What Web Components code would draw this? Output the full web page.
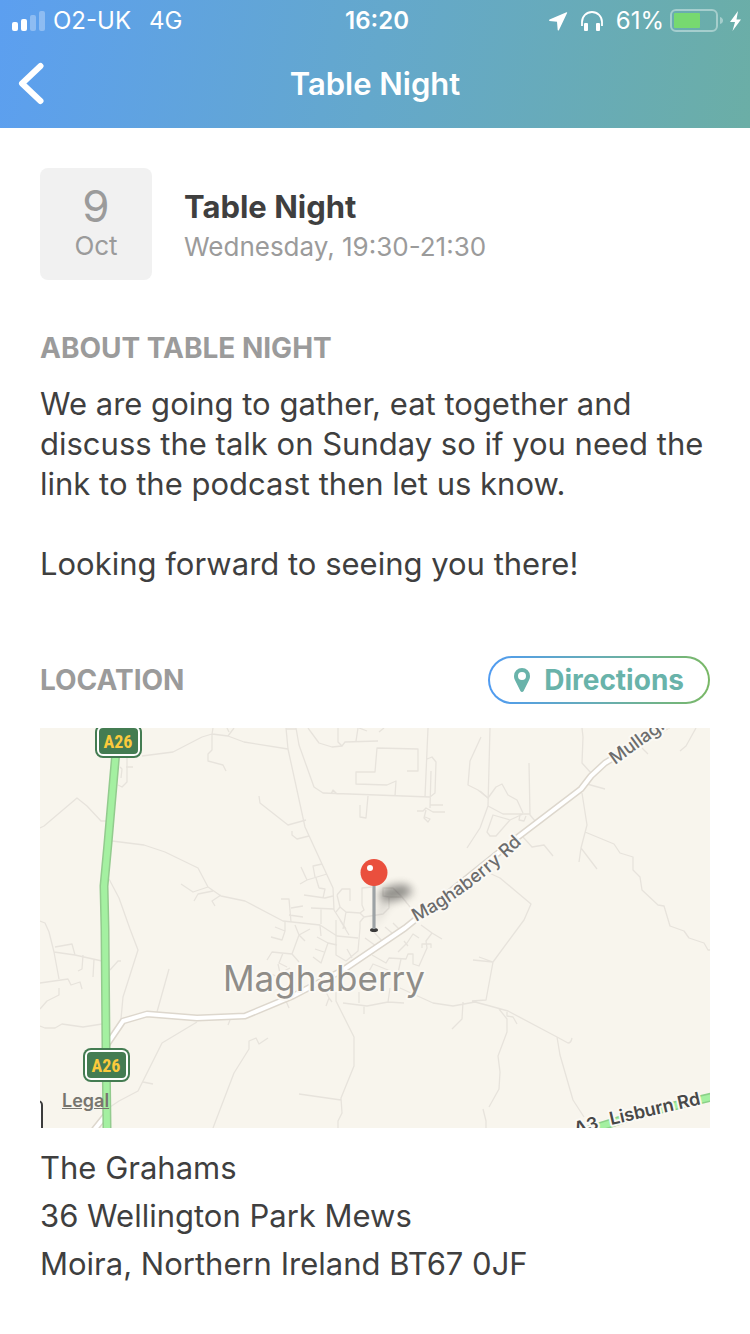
<!DOCTYPE html>
<html lang="en">
<head>
    <meta charset="UTF-8">
    <meta name="viewport" content="width=device-width, initial-scale=1">
    <title>Table Night</title>
    <style>
        body {
            margin: 0;
            background: #fff;
            color: #3f3f3f;
            font-family: Inter, "Liberation Sans", sans-serif;
        }
    </style>
</head>
<body>
    <event-page>
        <app-header slot="header" heading="Table Night">
            <status-bar carrier="O2-UK" network="4G" time="16:20" battery="61"></status-bar>
        </app-header>

        <event-summary day="9" month="Oct">
            <span slot="title">Table Night</span>
            <span slot="time">Wednesday, 19:30-21:30</span>
        </event-summary>

        <info-section>
            <span slot="title">ABOUT TABLE NIGHT</span>
            <event-text>
                <p>We are going to gather, eat together and discuss the talk on Sunday so if you need the link to the podcast then let us know.</p>
                <p>Looking forward to seeing you there!</p>
            </event-text>
        </info-section>

        <info-section class="location">
            <span slot="title">LOCATION</span>
            <directions-link slot="action" href="#directions">Directions</directions-link>
            <location-map></location-map>
            <postal-address>
                <span>The Grahams</span>
                <span>36 Wellington Park Mews</span>
                <span>Moira, Northern Ireland BT67 0JF</span>
            </postal-address>
        </info-section>
    </event-page>

    <script>
        class EventPage extends HTMLElement {
            template = `
                <style>
                    :host {
                        display: block;
                    }

                    main {
                        display: flex;
                        flex-direction: column;
                        gap: 48px;
                        padding: 40px;
                    }

                    ::slotted(.location) {
                        margin-top: 24px;
                    }
                </style>
                <slot name="header"></slot>
                <main><slot></slot></main>
            `;

            constructor() {
                super();
                this.attachShadow({ mode: 'open' });
                this.shadowRoot.innerHTML = this.template;
            }
        }

        class AppHeader extends HTMLElement {
            constructor() {
                super();
                this.attachShadow({ mode: 'open' });
            }

            connectedCallback() {
                this.shadowRoot.innerHTML = `
                    <style>
                        :host {
                            display: block;
                            background: linear-gradient(100deg, #5c9ff0, #64a8cc 50%, #6baea6);
                            color: #fff;
                        }

                        nav {
                            display: grid;
                            grid-template-columns: 64px 1fr 64px;
                            align-items: center;
                            height: 88px;
                        }

                        button {
                            display: flex;
                            align-items: center;
                            height: 88px;
                            padding: 0 0 0 16px;
                            border: 0;
                            background: none;
                            color: inherit;
                        }

                        h1 {
                            margin: 0;
                            font-size: 31px;
                            line-height: 40px;
                            font-weight: 600;
                            text-align: center;
                        }
                    </style>
                    <slot></slot>
                    <nav>
                        <button type="button" aria-label="Back">
                            <svg width="30" height="44" viewBox="0 0 30 44" fill="none" stroke="currentColor" stroke-width="6" stroke-linecap="round" stroke-linejoin="round">
                                <path d="M24.500 4 6 21.500 24.500 39"/>
                            </svg>
                        </button>
                        <h1>${this.getAttribute('heading')}</h1>
                    </nav>
                `;
            }
        }

        class StatusBar extends HTMLElement {
            constructor() {
                super();
                this.attachShadow({ mode: 'open' });
            }

            connectedCallback() {
                const battery = parseInt(this.getAttribute('battery')) || 0;

                this.shadowRoot.innerHTML = `
                    <style>
                        :host {
                            box-sizing: border-box;
                            display: grid;
                            grid-template-columns: 1fr auto 1fr;
                            align-items: center;
                            height: 40px;
                            padding: 2px 8px 0 12px;
                            font-size: 24px;
                            line-height: 38px;
                        }

                        div {
                            display: flex;
                            align-items: center;
                        }

                        .left {
                            gap: 8px;
                        }

                        .network {
                            margin-left: 10px;
                        }

                        .right {
                            justify-content: flex-end;
                            gap: 6px;
                        }

                        .headphones {
                            margin: 0 6px;
                        }

                        time {
                            font-weight: 600;
                        }

                        svg {
                            flex: none;
                        }
                    </style>
                    <div class="left">
                        <svg width="33" height="20" viewBox="0 0 33 20" fill="#fff">
                            <rect y="11" width="6" height="9" rx="2"/>
                            <rect x="9" y="8" width="6" height="12" rx="2"/>
                            <rect x="18" y="4" width="6" height="16" rx="2" opacity=".3"/>
                            <rect x="27" width="6" height="20" rx="2" opacity=".3"/>
                        </svg>
                        <span>${this.getAttribute('carrier')}</span>
                        <span class="network">${this.getAttribute('network')}</span>
                    </div>
                    <time>${this.getAttribute('time')}</time>
                    <div class="right">
                        <svg width="20" height="20" viewBox="0 0 20 20" fill="#fff">
                            <path d="M18.500 1.200 1.500 8.600q-1 .8 0 1.300l7.500.9.700 8.200q.5 1 1.300 0l8.200-17.200q.1-.8-.7-.6z"/>
                        </svg>
                        <svg class="headphones" width="24" height="22" viewBox="0 0 24 22" fill="#fff">
                            <path d="M2 16v-4a10 10 0 0 1 20 0v4" fill="none" stroke="#fff" stroke-width="1.800"/>
                            <rect x="4" y="13" width="4" height="8" rx="1"/>
                            <rect x="16" y="13" width="4" height="8" rx="1"/>
                        </svg>
                        <span>${battery}%</span>
                        <svg width="54" height="24" viewBox="0 0 54 24">
                            <rect x="1" y="1" width="46" height="21" rx="5" fill="none" stroke="#fff" stroke-width="2" opacity=".4"/>
                            <rect x="4" y="4" width="${Math.round(battery * 43 / 100)}" height="15" rx="1" fill="#77d970"/>
                            <path d="M50 8q3 1 3 3.500T50 15z" fill="#fff" opacity=".4"/>
                        </svg>
                        <svg width="12" height="20" viewBox="0 0 12 20" fill="#fff">
                            <path d="M8 0 0 11h5L2.500 20 11 8.500H6.500z"/>
                        </svg>
                    </div>
                `;
            }
        }

        class EventSummary extends HTMLElement {
            constructor() {
                super();
                this.attachShadow({ mode: 'open' });
            }

            connectedCallback() {
                this.shadowRoot.innerHTML = `
                    <style>
                        :host {
                            display: flex;
                            align-items: center;
                            gap: 32px;
                        }

                        .date {
                            box-sizing: border-box;
                            display: flex;
                            flex-direction: column;
                            align-items: center;
                            justify-content: center;
                            flex: none;
                            width: 112px;
                            height: 112px;
                            border-radius: 8px;
                            background: #f1f1f1;
                            color: #9b9b9b;
                        }

                        .day {
                            font-size: 44px;
                            line-height: 44px;
                        }

                        .month {
                            font-size: 26px;
                            line-height: 36px;
                        }

                        .details {
                            padding-top: 6px;
                        }

                        h2, p {
                            margin: 0;
                            line-height: 40px;
                        }

                        h2 {
                            font-size: 31px;
                            font-weight: 700;
                        }

                        p {
                            color: #9b9b9b;
                            font-size: 26px;
                        }
                    </style>
                    <div class="date">
                        <span class="day">${this.getAttribute('day')}</span>
                        <span class="month">${this.getAttribute('month')}</span>
                    </div>
                    <div class="details">
                        <h2><slot name="title"></slot></h2>
                        <p><slot name="time"></slot></p>
                    </div>
                `;
            }
        }

        class InfoSection extends HTMLElement {
            template = `
                <style>
                    :host {
                        display: block;
                    }

                    header {
                        display: flex;
                        align-items: center;
                        justify-content: space-between;
                        min-height: 40px;
                    }

                    h3 {
                        margin: 0;
                        color: #9b9b9b;
                        font-size: 28px;
                        line-height: 40px;
                        font-weight: 700;
                    }
                </style>
                <header>
                    <h3><slot name="title"></slot></h3>
                    <slot name="action"></slot>
                </header>
                <slot></slot>
            `;

            constructor() {
                super();
                this.attachShadow({ mode: 'open' });
                this.shadowRoot.innerHTML = this.template;
            }
        }

        class EventText extends HTMLElement {
            template = `
                <style>
                    :host {
                        display: flex;
                        flex-direction: column;
                        gap: 40px;
                        margin-top: 16px;
                        font-size: 31px;
                        line-height: 40px;
                    }

                    ::slotted(p) {
                        margin: 0;
                    }
                </style>
                <slot></slot>
            `;

            constructor() {
                super();
                this.attachShadow({ mode: 'open' });
                this.shadowRoot.innerHTML = this.template;
            }
        }

        class PostalAddress extends HTMLElement {
            template = `
                <style>
                    :host {
                        display: block;
                        margin-top: 16px;
                        font-size: 31px;
                        line-height: 48px;
                    }

                    address {
                        font-style: normal;
                    }

                    ::slotted(span) {
                        display: block;
                    }
                </style>
                <address><slot></slot></address>
            `;

            constructor() {
                super();
                this.attachShadow({ mode: 'open' });
                this.shadowRoot.innerHTML = this.template;
            }
        }

        class DirectionsLink extends HTMLElement {
            constructor() {
                super();
                this.attachShadow({ mode: 'open' });
            }

            connectedCallback() {
                this.shadowRoot.innerHTML = `
                    <style>
                        :host {
                            display: block;
                        }

                        a {
                            display: flex;
                            align-items: center;
                            gap: 14px;
                            padding: 0 24px;
                            border: 2px solid transparent;
                            border-radius: 24px;
                            background: linear-gradient(#fff, #fff) padding-box,
                                linear-gradient(90deg, #4f9bf2, #67adb4 50%, #79b865) border-box;
                            color: #69b3aa;
                            font-size: 28px;
                            line-height: 44px;
                            font-weight: 700;
                            text-decoration: none;
                        }
                    </style>
                    <a href="${this.getAttribute('href')}">
                        <svg width="16" height="24" viewBox="0 0 16 24" fill="currentColor">
                            <path fill-rule="evenodd" d="M8 0a8 8 0 0 0-8 8c0 2 .6 3.500 1.400 5l5 10a1.800 1.800 0 0 0 3.200 0l5-10C15.400 11.500 16 10 16 8a8 8 0 0 0-8-8zm0 4a4 4 0 1 1 0 8 4 4 0 0 1 0-8z"/>
                        </svg>
                        <slot></slot>
                    </a>
                `;
            }
        }

        class LocationMap extends HTMLElement {
            template = `
                <style>
                    :host {
                        display: block;
                        position: relative;
                        margin-top: 24px;
                        overflow: hidden;
                        background: #f8f5ed;
                    }

                    svg {
                        display: block;
                        width: 100%;
                        height: auto;
                    }

                    .lanes {
                        fill: none;
                        stroke: #e7e3dc;
                        stroke-width: 1.3;
                        stroke-linejoin: round;
                    }

                    .road {
                        fill: none;
                        stroke-linejoin: round;
                    }

                    text {
                        paint-order: stroke;
                        stroke: #fbf9f4;
                        stroke-width: 4px;
                        stroke-linejoin: round;
                        fill: #6c6c6c;
                        font-size: 18px;
                        font-weight: 500;
                    }

                    .town {
                        fill: #8f8d89;
                        font-size: 35px;
                        font-weight: 400;
                        text-anchor: middle;
                    }

                    .major {
                        fill: #484848;
                        font-weight: 600;
                    }

                    .shield text {
                        stroke: none;
                        fill: #fbca3c;
                        font-family: "Roboto Condensed", Roboto, sans-serif;
                        font-weight: 700;
                        text-anchor: middle;
                    }

                    a {
                        position: absolute;
                        left: 22px;
                        bottom: 15px;
                        color: #77756f;
                        font-size: 18px;
                        line-height: 24px;
                        font-weight: 600;
                    }
                </style>
                <svg viewBox="0 0 670 400">
                    <defs>
                        <path id="maghaberry-line" d="M376 194Q438 162 500 97"/>
                        <filter id="soft" x="-50%" y="-100%" width="200%" height="300%">
                            <feGaussianBlur stdDeviation="4"/>
                        </filter>
                    </defs>

                    <!-- west -->
                    <path class="lanes" d="M102 28 133 24 162 9 172 6 188 8 204 14 248 21M173 0 172 6V22L168 26V33L183 37 186 43M187 0 189 4M188 8 194 0
                        M87 29V54L82 59 78 57M86 39H93M80 39 82 41 81 50M0 100 4 98 37 70 47 78 61 93H67
                        M72 113 104 117 125 124 158 140 168 159 181 168 205 173 243 193 280 197 297 208 318 210
                        M141 156 153 164 168 159M154 173 158 166 173 163M181 167 172 173 175 178M219 68 220 75 248 97 266 92
                        M69 151 79 170 90 201 98 222 83 269 81 291M0 193 5 195 9 204 14 224 19 251M0 255 28 251 31 257 40 254 42 261
                        M14 224 35 227 62 233M15 219 32 216 35 227M43 227 42 241 38 243M54 231 53 249M70 242 78 233H81
                        M0 281 7 273 19 267V260M0 298 5 300H15L22 296 43 299 62 296M129 241 117 284
                        M157 294 122 315 98 363 79 373 70 379M103 354 113 356M173 400 194 345 209 321V313L216 310 219 316 228 310M190 292 188 297"/>

                    <!-- north -->
                    <path class="lanes" d="M246 0 248 21 265 99 293 160 294 182 306 201M246 1H256M256 0 259 17 274 59 283 65 390 69 395 65 396 34 392 29 387 31
                        M268 0 279 15 292 19 302 18 305 14 338 13M298 0V14L302 18M318 0 316 13M319 0 327 3M339 4 344 0
                        M367 43H378V21L337 20 335 44H316V56L347 57 356 53 355 68M388 0 385 69M391 43 390 80
                        M291 66 293 62 297 66M320 77V89L326 90 328 68M377 83H383L386 80 393 84H405M390 77H403M386 82 384 90 388 94 390 91 385 89
                        M252 103V107L257 111 269 108M441 9 430 33 428 57 438 62 448 70M450 0 448 78 440 100 427 120"/>

                    <!-- village streets -->
                    <path class="lanes" d="M261 139 267 152 260 156M267 152 287 146M282 136 273 138 275 149M276 150 279 160M264 167 285 170 293 168M279 160 285 161 283 170
                        M241 171H249L251 194M251 180 263 178M249 187 263 189M281 180V196M271 180 294 181M297 167 302 161H310V173M297 167 300 179 306 184 320 185 324 182 322 177V160L332 159
                        M300 179 296 184M306 184 303 201M320 185 324 189 343 186 349 180V169L343 168V160H353L362 169 370 179M349 169H362
                        M296 192V227L306 233M300 192 309 207M324 189 320 194V200L318 223 306 233M235 199 245 203 242 212 231 209M245 194V203
                        M255 197 259 207 270 201M259 207 252 226 232 224 227 232M243 225 239 235 247 239M252 226 259 234M259 207 265 213M280 197 281 208
                        M297 217 288 215 281 235 273 229M284 224 275 221M288 215 277 209M307 221 312 230M333 203 342 213M325 210 336 218M345 199 352 205M353 195 363 205
                        M358 224 367 215 373 206 379 210M364 213 368 218M332 227 346 235 349 230 366 231 368 226H373V236L379 238 387 220 386 213 392 205 381 197
                        M392 205 402 211M382 220V216H391V220M328 245 333 236 348 242 358 245 361 231M348 242 346 250M238 236 240 245M227 244 238 249M250 240 240 245M240 248 249 244"/>

                    <!-- south and east -->
                    <path class="lanes" d="M296 264V273L314 309V338L301 370 302 385 298 393V400M259 366 301 372M303 275 327 278 348 274 364 275M324 278V286M319 275V264
                        M348 274 350 260M292 274 289 270 286 278M289 270 285 262M246 273 249 280M360 260 393 275 413 278 435 274 450 278 468 283 517 309 528 315Q531 315 532 310
                        M423 274 422 291 412 301M432 273 446 272 453 234 484 192 491 176 460 150 447 144M453 234 433 232M453 234 439 229
                        M459 281 467 291V304L458 328 460 344 459 361 449 379M467 284V288L473 289 477 296M517 309 520 327 533 372 544 389M443 381 446 393V400
                        M545 104 574 116 580 125 593 129V142L600 149 602 162 618 177 624 178 630 198 644 203 649 210 664 215 668 222H670
                        M542 0 543 9 542 35 551 45M547 56 565 61M542 65 547 97 541 120 539 134M541 120 557 141M656 0 646 18 640 23M602 20 608 26
                        M489 35 490 87 496 94M440 63 448 70 456 59 462 56 468 67 477 72 483 85M448 78 463 86H490M483 86 470 92 456 108H450L447 104 453 87 470 92
                        M480 87 479 92 484 93 486 88M483 109 492 119 504 117 513 128"/>

                    <g class="road">
                        <path d="M54 402 66 387M66 318 83 293 107 286 157 290 205 288 253 268 303 242 365 200 478 109 541 61 551 48 565 35 640 -10" stroke="#ddd7cd" stroke-width="7"/>
                        <path d="M54 402 66 387M66 318 83 293 107 286 157 290 205 288 253 268 303 242 365 200 478 109 541 61 551 48 565 35 640 -10" stroke="#fff" stroke-width="4"/>
                        <path d="M78 0 68 115 64 158 65 201 66 319 67 400" stroke="#93cb8e" stroke-width="9"/>
                        <path d="M78 0 68 115 64 158 65 201 66 319 67 400" stroke="#a4f0a1" stroke-width="6"/>
                        <path d="M530 408 600 386 672 369" stroke="#8bd188" stroke-width="9"/>
                        <path d="M530 408 600 386 672 369" stroke="#a4f0a1" stroke-width="6"/>
                    </g>

                    <text><textPath href="#maghaberry-line">Maghaberry Rd</textPath></text>
                    <text transform="translate(575 37) rotate(-36)">Mullagh</text>
                    <text class="major" transform="translate(536 407) rotate(-16)">A3</text>
                    <text class="major" transform="translate(571 397) rotate(-13)">Lisburn Rd</text>
                    <text class="town" x="284" y="263">Maghaberry</text>

                    <g class="shield">
                        <rect x="55" y="-4" width="47" height="34" rx="8" fill="#447c52"/>
                        <rect x="58" y="-1" width="41" height="28" rx="5" fill="none" stroke="#fff" stroke-width="2"/>
                        <text x="78" y="20">A26</text>
                    </g>
                    <g class="shield">
                        <rect x="43" y="320" width="47" height="34" rx="8" fill="#447c52"/>
                        <rect x="46" y="323" width="41" height="28" rx="5" fill="none" stroke="#fff" stroke-width="2"/>
                        <text x="66" y="344">A26</text>
                    </g>
                    <rect x="-20" y="373" width="22" height="40" rx="4" fill="#fff" stroke="#3c3c3c" stroke-width="2"/>

                    <!-- pin -->
                    <path d="M334 200 342 160Q362 150 372 160T352 174Z" opacity=".1" filter="url(#soft)"/>
                    <ellipse cx="355" cy="165" rx="16" ry="7" transform="rotate(-14 355 165)" opacity=".35" filter="url(#soft)"/>
                    <ellipse cx="334" cy="202" rx="4" ry="2" fill="#3a3a3a"/>
                    <path d="M334 156V201" stroke="#8d9396" stroke-width="3"/>
                    <path d="M334 156V201" stroke="#acb2b4" stroke-width="1"/>
                    <circle cx="334" cy="144.500" r="13.500" fill="#ea4f3d"/>
                    <circle cx="330" cy="140" r="3" fill="#fff"/>
                </svg>
                <a href="#legal">Legal</a>
            `;

            constructor() {
                super();
                this.attachShadow({ mode: 'open' });
                this.shadowRoot.innerHTML = this.template;
            }
        }

        window.customElements.define('event-page', EventPage);
        window.customElements.define('app-header', AppHeader);
        window.customElements.define('status-bar', StatusBar);
        window.customElements.define('event-summary', EventSummary);
        window.customElements.define('info-section', InfoSection);
        window.customElements.define('event-text', EventText);
        window.customElements.define('postal-address', PostalAddress);
        window.customElements.define('directions-link', DirectionsLink);
        window.customElements.define('location-map', LocationMap);
    </script>
</body>
</html>
